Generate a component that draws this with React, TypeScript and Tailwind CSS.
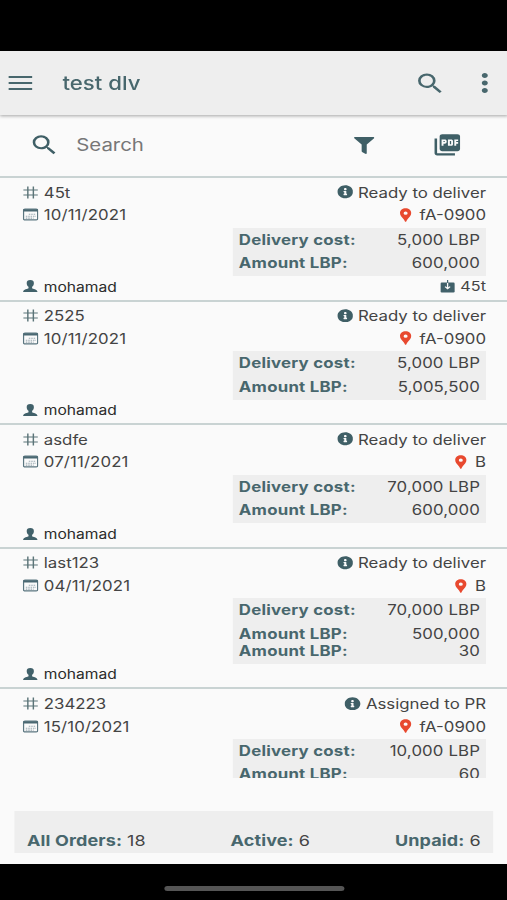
import type { ReactNode } from 'react';
import { MdSearch, MdMoreVert, MdPictureAsPdf, MdLocationPin } from 'react-icons/md';
import { FaFilter, FaInfoCircle } from 'react-icons/fa';

interface Order {
  code: string;
  date: string;
  status: string;
  area: string;
  cost: string;
  amounts: string[];
  client?: string;
  ref?: string;
}

const orders: Order[] = [
  { code: '45t', date: '10/11/2021', status: 'Ready to deliver', area: 'fA-0900', cost: '5,000 LBP', amounts: ['600,000'], client: 'mohamad', ref: '45t' },
  { code: '2525', date: '10/11/2021', status: 'Ready to deliver', area: 'fA-0900', cost: '5,000 LBP', amounts: ['5,005,500'], client: 'mohamad' },
  { code: 'asdfe', date: '07/11/2021', status: 'Ready to deliver', area: 'B', cost: '70,000 LBP', amounts: ['600,000'], client: 'mohamad' },
  { code: 'last123', date: '04/11/2021', status: 'Ready to deliver', area: 'B', cost: '70,000 LBP', amounts: ['500,000', '30'], client: 'mohamad' },
  { code: '234223', date: '15/10/2021', status: 'Assigned to PR', area: 'fA-0900', cost: '10,000 LBP', amounts: ['60'] },
];

function HashIcon() {
  return (
    <svg width="13" height="13" viewBox="0 0 13 13" fill="none" stroke="#5b7478" strokeWidth="1.2">
      <path d="M4.2 0.5V12.5M8.8 0.5V12.5M0.5 4H12.5M0.5 9H12.5" />
    </svg>
  );
}

function CalendarIcon() {
  return (
    <svg width="13" height="13" viewBox="0 0 13 13" fill="none">
      <rect x="0.6" y="1.1" width="11.8" height="10.8" rx="1.2" stroke="#5b7680" strokeWidth="1.1" />
      <path d="M0.6 2.4H12.4" stroke="#4a6872" strokeWidth="2.4" />
      <path d="M5 6.2H11M2.5 8.2H11M2.5 10.1H9" stroke="#9cabb3" strokeWidth="1.1" strokeDasharray="1.3 0.7" />
    </svg>
  );
}

function PersonIcon() {
  return (
    <svg width="12.5" height="12" viewBox="0 0 12 12" fill="#41616a">
      <path d="M6 0C4 0 2.9 1.2 3 3.2c.1 1.7.6 2.8 1.5 3.5v1.5C4 9.2.2 8.8 0 12h12c-.2-3.2-4-2.8-4.500-3.800V6.700C8.400 6 8.900 4.900 9 3.200 9.100 1.200 8 0 6 0z" />
    </svg>
  );
}

function InboxIcon() {
  return (
    <svg width="12" height="13" viewBox="0 0 12 13">
      <path d="M1.2 2.5H10.8Q12 2.5 12 3.7V11.3Q12 12.5 10.8 12.5H1.2Q0 12.5 0 11.3V3.7Q0 2.5 1.2 2.5Z" fill="#41616a" />
      <path d="M6 3V8.5M3.9 6.6L6 8.7L8.1 6.6" fill="none" stroke="#fafafa" strokeWidth="1.1" />
      <path d="M6 0V2.8" stroke="#41616a" strokeWidth="1" />
    </svg>
  );
}

function Line({ icon, children }: { icon: ReactNode; children: ReactNode }) {
  return (
    <div className="flex items-center">
      <span className="flex w-[17.5px] shrink-0 items-center">{icon}</span>
      <span>{children}</span>
    </div>
  );
}

function CostRow({ label, value }: { label: string; value: string }) {
  return (
    <div className="flex justify-between leading-[17px]">
      <span className="font-bold tracking-[0.2px] text-[#48676d]">{label}</span>
      <span className="tracking-[0.1px]">{value}</span>
    </div>
  );
}

function OrderCard({ order }: { order: Order }) {
  return (
    <div className="shrink-0 border-t-2 border-[#c9d3d3] pt-[3px] pr-[17.5px] pb-[3px] pl-[19px]">
      <div className="flex h-[22px] items-center justify-between">
        <Line icon={<HashIcon />}>{order.code}</Line>
        <Line icon={<FaInfoCircle size={13.5} color="#3f5f66" />}>{order.status}</Line>
      </div>
      <div className="flex h-[23.6px] items-center justify-between">
        <Line icon={<CalendarIcon />}>
          <span className="tracking-[0.1px]">{order.date}</span>
        </Line>
        <div className="flex items-center gap-[3.5px]">
          <MdLocationPin size={16} color="#e8492f" />
          <span>{order.area}</span>
        </div>
      </div>
      <div className="mt-px ml-auto w-[211px] bg-[#eeeeee] pt-[3px] pr-[5px] pb-[5px] pl-[5px]">
        <CostRow label="Delivery cost:" value={order.cost} />
        <div className="pt-[6.5px]">
          {order.amounts.map((amount) => (
            <CostRow key={amount} label="Amount LBP:" value={amount} />
          ))}
        </div>
      </div>
      <div className="flex h-[20.5px] items-center justify-between">
        {order.client && (
          <Line icon={<PersonIcon />}>
            <span className="text-[13px] text-[#2b2b2b]">{order.client}</span>
          </Line>
        )}
        {order.ref && (
          <div className="flex items-center gap-[5px]">
            <InboxIcon />
            <span className="text-[13.5px]">{order.ref}</span>
          </div>
        )}
      </div>
    </div>
  );
}

function Total({ label, value }: { label: string; value: number }) {
  return (
    <div>
      <span className="font-bold tracking-[0.1px] text-[#48676d]">{label}</span> {value}
    </div>
  );
}

export default function App() {
  return (
    <div className="h-[900px] w-[507px] overflow-hidden bg-black font-['Inter',sans-serif]">
      {/* The phone screen is shown wider than its native aspect ratio */}
      <div className="flex h-[900px] w-[422.5px] origin-top-left scale-x-[1.2] flex-col pt-[51px] text-[14px] text-[#444444]">
        <header className="z-10 flex h-16 shrink-0 items-center bg-[#eeeeee] pr-[4px] pl-[7px] text-[#48676d] shadow-[0_1px_3px_rgba(0,0,0,0.35)]">
          <svg width="20" height="14" viewBox="0 0 20 14" stroke="#48676d" strokeWidth="2">
            <path d="M0 1H20M0 7H20M0 13H20" />
          </svg>
          <h1 className="mt-0.5 ml-[25px] text-[18.5px] font-medium">test dlv</h1>
          <MdSearch size={27} className="ml-auto" />
          <MdMoreVert size={30} className="ml-[16.5px]" />
        </header>

        <div className="flex h-[61px] shrink-0 items-center bg-[#fafafa] pr-[37.5px] pl-[24px] text-[#3f5f66]">
          <MdSearch size={26} className="mb-0.5" />
          <span className="ml-[13.5px] text-[17px] text-[#777777]">Search</span>
          <FaFilter size={17} className="ml-auto" />
          <MdPictureAsPdf size={25.5} className="mb-0.5 ml-[47.5px]" />
        </div>

        <main className="flex h-[602px] shrink-0 flex-col overflow-hidden bg-[#fafafa]">
          {orders.map((order) => (
            <OrderCard key={order.code} order={order} />
          ))}
        </main>

        <div className="h-[86px] shrink-0 bg-[#fafafa] px-[11.5px] pt-[33px]">
          <footer className="flex h-[42px] items-end justify-between bg-[#eeeeee] pr-[10.5px] pb-px pl-[11px] text-[15px]">
            <Total label="All Orders:" value={18} />
            <Total label="Active:" value={6} />
            <Total label="Unpaid:" value={6} />
          </footer>
        </div>

        <div className="flex flex-1 items-center justify-center">
          <div className="mt-[13px] ml-px h-[5px] w-[150px] rounded-full bg-[#555555]" />
        </div>
      </div>
    </div>
  );
}
